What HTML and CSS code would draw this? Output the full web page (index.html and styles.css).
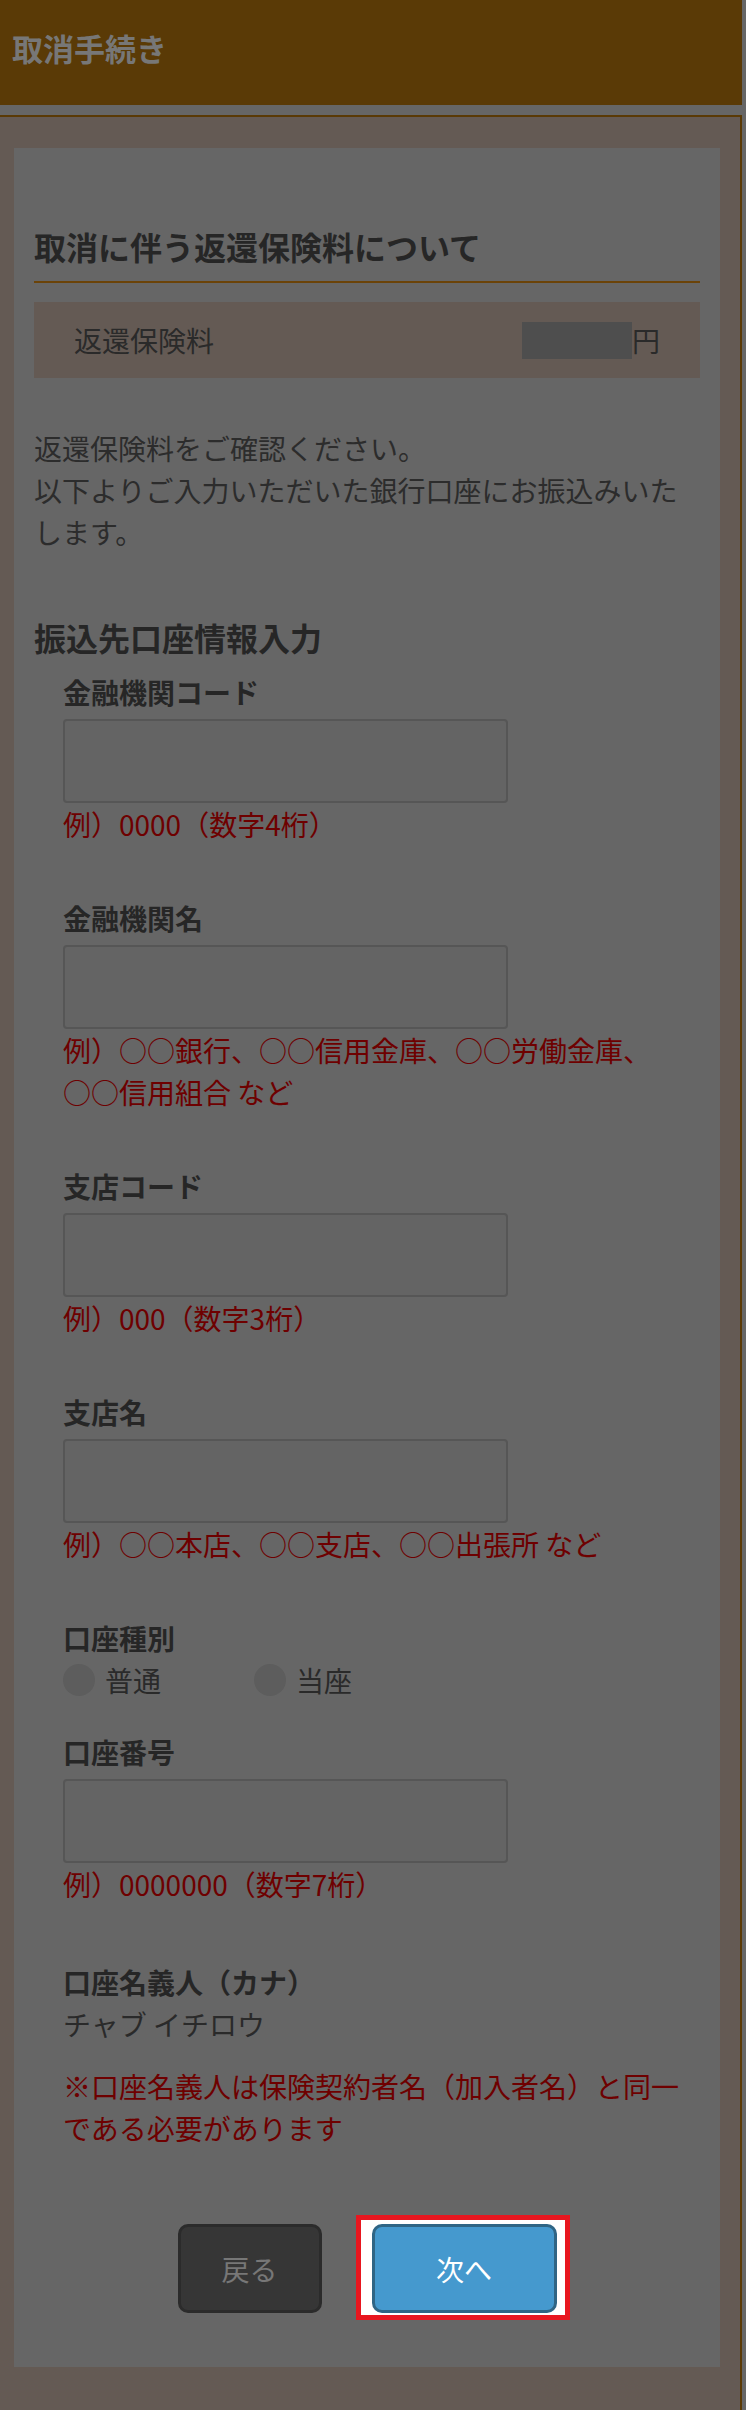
FILE: index.html
```html
<!DOCTYPE html>
<html lang="ja">
<head>
<meta charset="utf-8">
<title>取消手続き</title>
<link rel="stylesheet" href="styles.css">
</head>
<body>
<header class="topbar"><h1 class="topbar-title">取消手続き</h1></header>
<div class="frame">
  <main class="panel">
    <h2 class="sec-title">取消に伴う返還保険料について</h2>
    <div class="refund-row">
      <span class="refund-label">返還保険料</span>
      <span class="refund-value"><span class="masked"></span>円</span>
    </div>
    <p class="lead">返還保険料をご確認ください。<br>以下よりご入力いただいた銀行口座にお振込みいたします。</p>

    <h3 class="sub-title">振込先口座情報入力</h3>
    <div class="fields">
      <div class="field">
        <div class="label">金融機関コード</div>
        <div class="input"></div>
        <div class="hint">例）0000（数字4桁）</div>
      </div>
      <div class="field">
        <div class="label">金融機関名</div>
        <div class="input"></div>
        <div class="hint">例）○○銀行、○○信用金庫、○○労働金庫、○○信用組合 など</div>
      </div>
      <div class="field">
        <div class="label">支店コード</div>
        <div class="input"></div>
        <div class="hint">例）000（数字3桁）</div>
      </div>
      <div class="field">
        <div class="label">支店名</div>
        <div class="input"></div>
        <div class="hint">例）○○本店、○○支店、○○出張所 など</div>
      </div>
      <div class="field">
        <div class="label">口座種別</div>
        <div class="radios">
          <span class="radio"><span class="dot"></span>普通</span>
          <span class="radio"><span class="dot"></span>当座</span>
        </div>
      </div>
      <div class="field field-tight">
        <div class="label">口座番号</div>
        <div class="input"></div>
        <div class="hint">例）0000000（数字7桁）</div>
      </div>
      <div class="field field-name">
        <div class="label">口座名義人（カナ）</div>
        <div class="value">チャブ イチロウ</div>
        <div class="note">※口座名義人は保険契約者名（加入者名）と同一である必要があります</div>
      </div>
    </div>

    <div class="actions">
      <button class="btn btn-back" type="button">戻る</button>
      <span class="highlight"><button class="btn btn-next" type="button">次へ</button></span>
    </div>
  </main>
</div>
</body>
</html>
```
FILE: styles.css
```css
html, body {
  margin: 0;
  padding: 0;
}
body {
  background: #666666;
  font-family: "Noto Sans CJK JP", "Noto Sans", sans-serif;
  color: #2c2c2c;
  width: 746px;
  height: 2410px;
  overflow: hidden;
}
.topbar {
  box-sizing: border-box;
  width: 742px;
  height: 105px;
  background: #5a3a06;
  padding: 25px 12px 0;
}
.topbar-title {
  margin: 0;
  font-size: 31px;
  line-height: 46px;
  font-weight: 700;
  color: #777777;
}
.frame {
  margin-top: 10px;
  box-sizing: border-box;
  border-top: 2px solid #5a3a06;
  border-right: 2px solid #5a3a06;
  width: 742px;
  background: #645a54;
  padding: 31px 20px 60px 14px;
}
.panel {
  display: block;
  background: #666666;
  padding: 74px 20px 54px;
}
.sec-title {
  margin: 0;
  font-size: 32px;
  line-height: 48px;
  font-weight: 700;
  color: #262626;
  padding-bottom: 11px;
  border-bottom: 2px solid #6b4308;
}
.refund-row {
  margin-top: 19px;
  height: 76px;
  box-sizing: border-box;
  background: #645a54;
  display: flex;
  align-items: center;
  justify-content: space-between;
  padding: 0 40px 0 40px;
  font-size: 28px;
  line-height: 42px;
  color: #2a2a2a;
}
.refund-value {
  display: flex;
  align-items: center;
}
.masked {
  display: inline-block;
  width: 110px;
  height: 37px;
  background: #4e4e4e;
}
.lead {
  margin: 49px 0 0;
  font-size: 28px;
  line-height: 42px;
  color: #2c2c2c;
}
.sub-title {
  margin: 60px 0 0;
  font-size: 32px;
  line-height: 48px;
  font-weight: 700;
  color: #262626;
}
.fields {
  margin-top: 10px;
  padding-left: 29px;
}
.field + .field {
  margin-top: 52px;
}
.field.field-tight {
  margin-top: 30px;
}
.field.field-name {
  margin-top: 56px;
}
.label {
  font-size: 28px;
  line-height: 42px;
  font-weight: 700;
  color: #262626;
  margin-bottom: 6px;
}
.input {
  box-sizing: border-box;
  width: 445px;
  height: 84px;
  border: 2px solid #565656;
  border-radius: 4px;
  background: #646464;
}
.hint {
  font-size: 28px;
  line-height: 42px;
  color: #6e0000;
}
.radios {
  display: flex;
  align-items: center;
  gap: 93px;
  margin-top: -6px;
  font-size: 28px;
  line-height: 42px;
  color: #2a2a2a;
}
.radio {
  display: inline-flex;
  align-items: center;
  gap: 10px;
}
.dot {
  display: inline-block;
  width: 32px;
  height: 32px;
  border-radius: 50%;
  background: #5d5d5d;
}
.value {
  margin-top: -6px;
  font-size: 28px;
  line-height: 42px;
  color: #2a2a2a;
}
.note {
  margin-top: 20px;
  font-size: 28px;
  line-height: 42px;
  color: #6e0000;
}
.actions {
  margin-top: 75px;
  display: flex;
  justify-content: center;
  gap: 50px;
}
.btn {
  box-sizing: border-box;
  height: 89px;
  border-radius: 10px;
  font-family: "Noto Sans CJK JP", "Noto Sans", sans-serif;
  font-size: 28px;
  line-height: 1;
  padding: 0;
  cursor: pointer;
}
.btn-back {
  width: 144px;
  background: #363636;
  border: 3px solid #2b2b2b;
  color: #777777;
}
.highlight {
  position: relative;
  display: inline-block;
  height: 89px;
}
.highlight::before {
  content: "";
  position: absolute;
  top: -9px;
  bottom: -7px;
  left: -16px;
  right: -13px;
  background: #ffffff;
  border: 5px solid #e8161f;
  z-index: 0;
}
.btn-next {
  position: relative;
  z-index: 1;
  width: 185px;
  background: #4599ce;
  border: 3px solid #2f6585;
  color: #ffffff;
}
```
